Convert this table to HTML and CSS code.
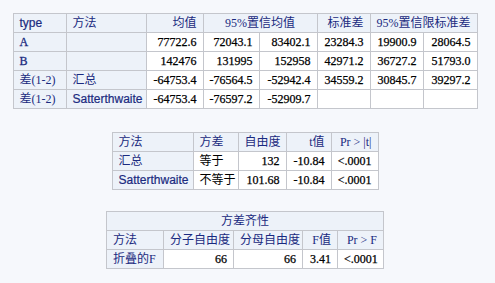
FILE: index.html
```html
<!DOCTYPE html>
<html>
<head>
<meta charset="utf-8">
<link rel="stylesheet" href="styles.css">
</head>
<body>
<div class="page">
  <table class="t t1">
    <colgroup><col style="width:53px"><col style="width:80px"><col style="width:57px"><col style="width:56px"><col style="width:58px"><col style="width:53px"><col style="width:53px"><col style="width:54px"></colgroup>
    <tr><th class="l sans">type</th><th class="l">方法</th><th class="r">均值</th><th class="c" colspan="2">95%置信均值</th><th class="r">标准差</th><th class="c" colspan="2">95%置信限标准差</th></tr>
    <tr><th class="l lat">A</th><th></th><td>77722.6</td><td>72043.1</td><td>83402.1</td><td>23284.3</td><td>19900.9</td><td>28064.5</td></tr>
    <tr><th class="l lat">B</th><th></th><td>142476</td><td>131995</td><td>152958</td><td>42971.2</td><td>36727.2</td><td>51793.0</td></tr>
    <tr><th class="l">差(1-2)</th><th class="l">汇总</th><td>-64753.4</td><td>-76564.5</td><td>-52942.4</td><td>34559.2</td><td>30845.7</td><td>39297.2</td></tr>
    <tr><th class="l">差(1-2)</th><th class="l sans">Satterthwaite</th><td>-64753.4</td><td>-76597.2</td><td>-52909.7</td><td></td><td></td><td></td></tr>
  </table>

  <table class="t t2">
    <colgroup><col style="width:81px"><col style="width:45px"><col style="width:48px"><col style="width:45px"><col style="width:47px"></colgroup>
    <tr><th class="l">方法</th><th class="l">方差</th><th class="r">自由度</th><th class="r">t值</th><th class="r">Pr &gt; |t|</th></tr>
    <tr><th class="l">汇总</th><td class="l">等于</td><td>132</td><td>-10.84</td><td>&lt;.0001</td></tr>
    <tr><th class="l sans">Satterthwaite</th><td class="l">不等于</td><td>101.68</td><td>-10.84</td><td>&lt;.0001</td></tr>
  </table>

  <table class="t t3">
    <colgroup><col style="width:57px"><col style="width:70px"><col style="width:69px"><col style="width:35px"><col style="width:46px"></colgroup>
    <tr><th class="c" colspan="5">方差齐性</th></tr>
    <tr><th class="l">方法</th><th class="r">分子自由度</th><th class="r">分母自由度</th><th class="r">F值</th><th class="r">Pr &gt; F</th></tr>
    <tr><th class="l">折叠的F</th><td>66</td><td>66</td><td>3.41</td><td>&lt;.0001</td></tr>
  </table>
</div>
</body>
</html>
```

FILE: styles.css
```css
html, body {
  margin: 0;
  padding: 0;
  background: #f6f8fc;
}
.page {
  width: 464px;
  padding: 13px 0 0 13px;
  display: flex;
  flex-direction: column;
  align-items: center;
}
.t {
  border-collapse: collapse;
  table-layout: fixed;
  font-family: "Liberation Serif", "Noto Sans CJK SC", serif;
  font-size: 12px;
  color: #000;
}
.t1 { width: 464px; }
.t2 { width: 266px; margin-top: 23px; }
.t3 { width: 277px; margin-top: 21px; }
.t th, .t td {
  border: 1px solid #c4c6cc;
  height: 18px;
  padding: 0 6px;
  white-space: nowrap;
  overflow: hidden;
  line-height: 18px;
}
.t th {
  background: #edf2f9;
  color: #1a2a80;
  font-weight: normal;
}
.t td {
  background: #fff;
  text-align: right;
  -webkit-text-stroke: 0.25px #000;
}
.t td.l { -webkit-text-stroke: 0; }
.t .l { text-align: left; }
.t .r { text-align: right; }
.t .c { text-align: center; }
.sans { font-family: "Liberation Sans", "Noto Sans CJK SC", sans-serif; -webkit-text-stroke: 0.2px #1a2a80; }
.lat { -webkit-text-stroke: 0.3px #1a2a80; }
```
